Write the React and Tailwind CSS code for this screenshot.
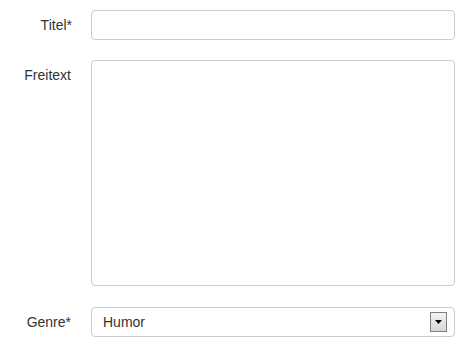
export default function App() {
  return (
    <div className="w-[473px] h-[348px] bg-white pt-[10px] font-['Liberation_Sans',Arial,sans-serif] text-[14px] text-[#333]">
      <div className="flex flex-col">
        <div className="flex items-center">
          <label className="w-[72px] text-right leading-5">Titel*</label>
          <input
            type="text"
            className="ml-[19px] w-[364px] h-[30px] border border-[#ccc] rounded-[4px] px-3 outline-none"
          />
        </div>
        <div className="flex items-start mt-[20px]">
          <label className="w-[71px] text-right leading-5 pt-[5px]">Freitext</label>
          <textarea className="ml-[20px] w-[364px] h-[226px] border border-[#ccc] rounded-[4px] px-3 py-1 outline-none resize-none" />
        </div>
        <div className="flex items-center mt-[21px]">
          <label className="w-[71px] text-right leading-5">Genre*</label>
          <div className="relative ml-[20px] w-[364px] h-[30px] border border-[#ccc] rounded-[4px] pl-[11px] flex items-center">
            <span>Humor</span>
            <div className="absolute right-[7px] top-[4px] w-[17px] h-[20px] border border-[#808080] bg-gradient-to-b from-[#f4f4f4] to-[#d6d6d6] flex items-center justify-center">
              <svg width="7" height="4" viewBox="0 0 7 4">
                <path d="M0 0h7L3.5 4z" fill="#000" />
              </svg>
            </div>
          </div>
        </div>
      </div>
    </div>
  )
}
